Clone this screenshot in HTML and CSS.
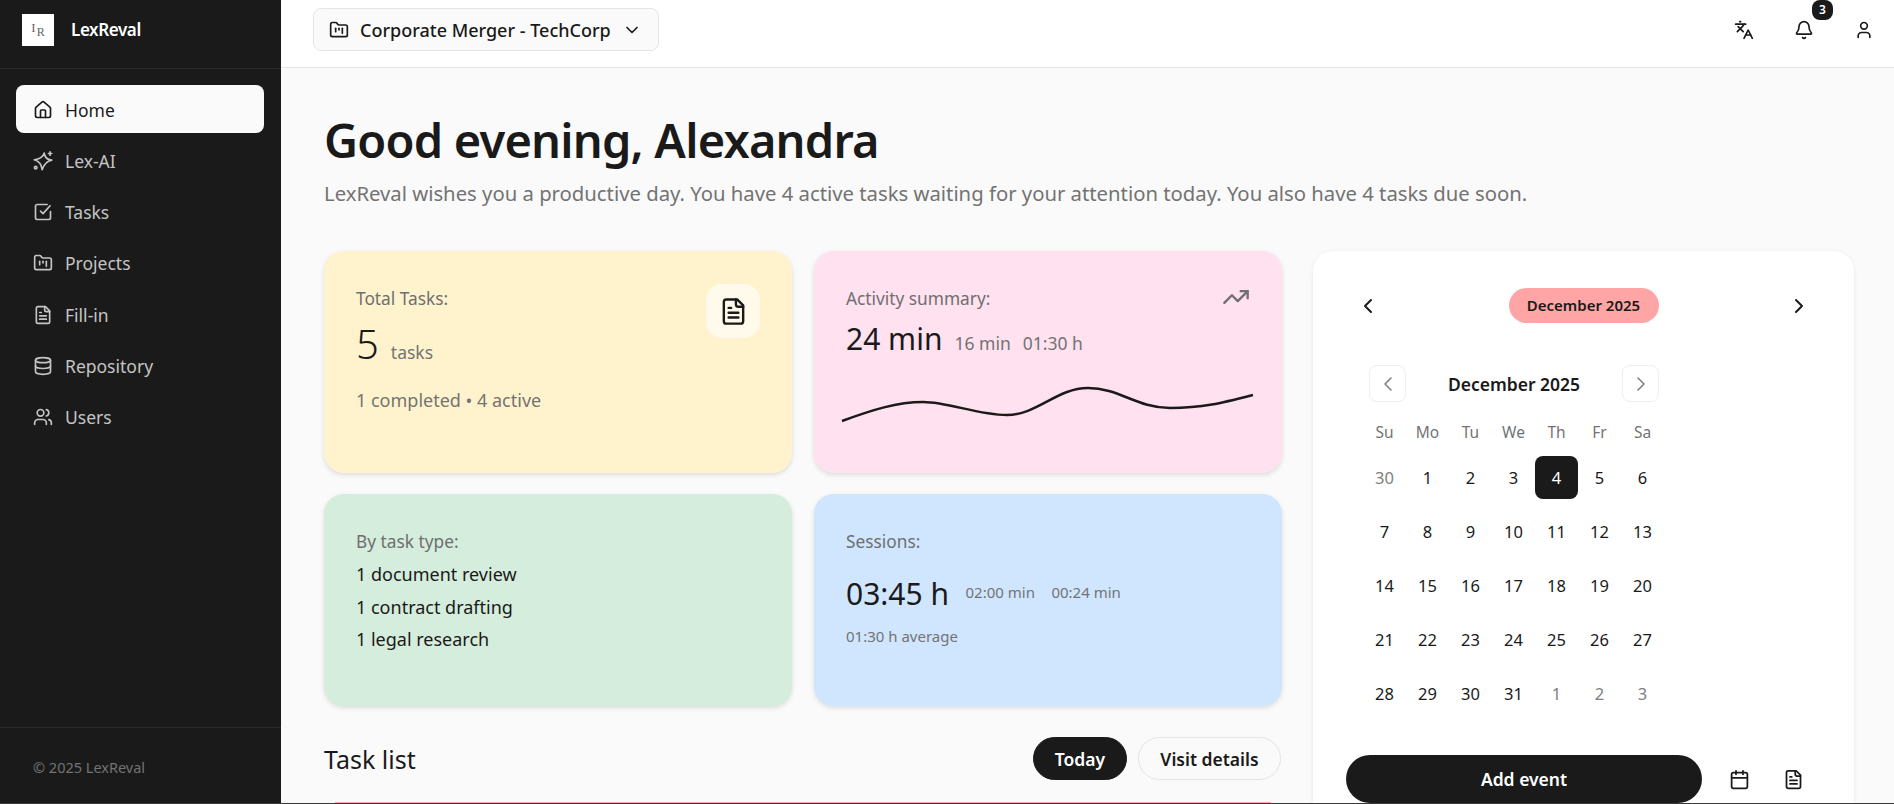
FILE: index.html
```html
<!DOCTYPE html>
<html lang="en">
<head>
  <meta charset="UTF-8">
  <meta name="viewport" content="width=device-width, initial-scale=1.0">
  <title>LexReval - Home</title>
  <link rel="stylesheet" href="styles.css">
</head>
<body>

  <!-- Sidebar -->
  <aside class="sidebar">
    <div class="brand">
      <div class="brand-logo"><span class="brand-l">I</span><span class="brand-r">R</span></div>
      <span class="brand-name">LexReval</span>
    </div>
    <nav class="side-nav">
      <a class="side-link active" href="#">
        <svg class="icon" viewBox="0 0 24 24"><path d="M15 21v-8a1 1 0 0 0-1-1h-4a1 1 0 0 0-1 1v8"/><path d="M3 10a2 2 0 0 1 .709-1.528l7-5.999a2 2 0 0 1 2.582 0l7 5.999A2 2 0 0 1 21 10v9a2 2 0 0 1-2 2H5a2 2 0 0 1-2-2z"/></svg>
        Home
      </a>
      <a class="side-link" href="#">
        <svg class="icon" viewBox="0 0 24 24"><path d="M13.5 2.5C13.8 7 16 10 22.5 11 17 12 13.5 15 11 22.5 10.5 17 8 12.5 1.5 10.5 7.5 10 12 7.5 13.5 2.5Z"/><path d="M20.5 1v4"/><path d="M18.5 3h4"/><circle cx="3.2" cy="20" r="1.5"/></svg>
        Lex-AI
      </a>
      <a class="side-link" href="#">
        <svg class="icon" viewBox="0 0 24 24"><path d="M21 11.5V19a2 2 0 0 1-2 2H5a2 2 0 0 1-2-2V5a2 2 0 0 1 2-2h12"/><path d="m9 11 3 3 8.5-9.5"/></svg>
        Tasks
      </a>
      <a class="side-link" href="#">
        <svg class="icon" viewBox="0 0 24 24"><path d="M4 20h16a2 2 0 0 0 2-2V8a2 2 0 0 0-2-2h-7.93a2 2 0 0 1-1.66-.9l-.82-1.2A2 2 0 0 0 7.93 3H4a2 2 0 0 0-2 2v13c0 1.1.9 2 2 2Z"/><path d="M8 10v4"/><path d="M12 10v2"/><path d="M16 10v6"/></svg>
        Projects
      </a>
      <a class="side-link" href="#">
        <svg class="icon" viewBox="0 0 24 24"><path d="M15 2H6a2 2 0 0 0-2 2v16a2 2 0 0 0 2 2h12a2 2 0 0 0 2-2V7Z"/><path d="M14 2v4a2 2 0 0 0 2 2h4"/><path d="M10 9H8"/><path d="M16 13H8"/><path d="M16 17H8"/></svg>
        Fill-in
      </a>
      <a class="side-link" href="#">
        <svg class="icon" viewBox="0 0 24 24"><ellipse cx="12" cy="5" rx="9" ry="3"/><path d="M3 5V19A9 3 0 0 0 21 19V5"/><path d="M3 12A9 3 0 0 0 21 12"/></svg>
        Repository
      </a>
      <a class="side-link" href="#">
        <svg class="icon" viewBox="0 0 24 24"><path d="M16 21v-2a4 4 0 0 0-4-4H6a4 4 0 0 0-4 4v2"/><circle cx="9" cy="7" r="4"/><path d="M22 21v-2a4 4 0 0 0-3-3.87"/><path d="M16 3.13a4 4 0 0 1 0 7.75"/></svg>
        Users
      </a>
    </nav>
    <div class="side-footer">&copy; 2025 LexReval</div>
  </aside>

  <div class="page">

    <!-- Top bar -->
    <header class="topbar">
      <button class="project-select">
        <svg class="icon" viewBox="0 0 24 24"><path d="M4 20h16a2 2 0 0 0 2-2V8a2 2 0 0 0-2-2h-7.93a2 2 0 0 1-1.66-.9l-.82-1.2A2 2 0 0 0 7.93 3H4a2 2 0 0 0-2 2v13c0 1.1.9 2 2 2Z"/><path d="M8 10v4"/><path d="M12 10v2"/><path d="M16 10v6"/></svg>
        <span>Corporate Merger - TechCorp</span>
        <svg class="icon" viewBox="0 0 24 24"><path d="m6 9 6 6 6-6"/></svg>
      </button>
      <div class="top-actions">
        <button class="top-btn">
          <svg class="icon" viewBox="0 0 24 24"><path d="m5 8 6 6"/><path d="m4 14 6-6 2-3"/><path d="M2 5h12"/><path d="M7 2h1"/><path d="m22 22-5-10-5 10"/><path d="M14 18h6"/></svg>
        </button>
        <button class="top-btn">
          <svg class="icon" viewBox="0 0 24 24"><path d="M10.268 21a2 2 0 0 0 3.464 0"/><path d="M3.262 15.326A1 1 0 0 0 4 17h16a1 1 0 0 0 .74-1.673C19.41 13.956 18 12.499 18 8A6 6 0 0 0 6 8c0 4.499-1.411 5.956-2.738 7.326"/></svg>
          <span class="badge">3</span>
        </button>
        <button class="top-btn">
          <svg class="icon" viewBox="0 0 24 24"><path d="M19 21v-2a4 4 0 0 0-4-4H9a4 4 0 0 0-4 4v2"/><circle cx="12" cy="7" r="4"/></svg>
        </button>
      </div>
    </header>

    <main class="content">
      <h1 class="greeting">Good evening, Alexandra</h1>
      <p class="greeting-sub">LexReval wishes you a productive day. You have 4 active tasks waiting for your attention today. You also have 4 tasks due soon.</p>

      <div class="dashboard">
        <div class="left-col">
          <div class="stat-grid">

            <section class="stat-card yellow">
              <div class="stat-label">Total Tasks:</div>
              <div class="stat-main">
                <span class="big-value">5</span>
                <span class="stat-unit">tasks</span>
              </div>
              <div class="stat-note">1 completed &bull; 4 active</div>
              <div class="doc-badge">
                <svg class="icon" viewBox="0 0 24 24"><path d="M15 2H6a2 2 0 0 0-2 2v16a2 2 0 0 0 2 2h12a2 2 0 0 0 2-2V7Z"/><path d="M14 2v4a2 2 0 0 0 2 2h4"/><path d="M10 9H8"/><path d="M16 13H8"/><path d="M16 17H8"/></svg>
              </div>
            </section>

            <section class="stat-card pink">
              <div class="stat-label">Activity summary:</div>
              <div class="stat-main">
                <span class="mid-value">24 min</span>
                <span class="stat-unit">16 min</span>
                <span class="stat-unit">01:30 h</span>
              </div>
              <svg class="trend-icon" viewBox="0 0 24 24"><path d="M22 7 13.5 15.5l-5-5L2 17"/><path d="M16 7h6v6"/></svg>
              <svg class="sparkline" viewBox="0 0 412 40"><path d="M0 35C30 24 55 16 81 16S135 29 165 29 215 2 246 2 295 22 328 22 380 17 411 9"/></svg>
            </section>

            <section class="stat-card green">
              <div class="stat-label">By task type:</div>
              <ul class="type-list">
                <li>1 document review</li>
                <li>1 contract drafting</li>
                <li>1 legal research</li>
              </ul>
            </section>

            <section class="stat-card blue">
              <div class="stat-label">Sessions:</div>
              <div class="session-main">
                <span class="mid-value">03:45 h</span>
                <span class="session-sub">02:00 min</span>
                <span class="session-sub">00:24 min</span>
              </div>
              <div class="session-avg">01:30 h average</div>
            </section>

          </div>

          <div class="task-head">
            <h2>Task list</h2>
            <div class="task-actions">
              <button class="pill-btn dark">Today</button>
              <button class="pill-btn">Visit details</button>
            </div>
          </div>
          <div class="task-card"></div>
        </div>

        <!-- Calendar -->
        <section class="calendar-card">
          <div class="month-bar">
            <svg class="icon chevron" viewBox="0 0 24 24"><path d="m15 18-6-6 6-6"/></svg>
            <span class="month-pill">December 2025</span>
            <svg class="icon chevron" viewBox="0 0 24 24"><path d="m9 18 6-6-6-6"/></svg>
          </div>
          <div class="cal">
            <div class="cal-head">
              <button class="cal-nav"><svg class="icon chevron" viewBox="0 0 24 24"><path d="m15 18-6-6 6-6"/></svg></button>
              <span class="cal-title">December 2025</span>
              <button class="cal-nav"><svg class="icon chevron" viewBox="0 0 24 24"><path d="m9 18 6-6-6-6"/></svg></button>
            </div>
            <div class="cal-weekdays">
              <span>Su</span><span>Mo</span><span>Tu</span><span>We</span><span>Th</span><span>Fr</span><span>Sa</span>
            </div>
            <div class="cal-days">
              <span class="muted">30</span><span>1</span><span>2</span><span>3</span><span class="today">4</span><span>5</span><span>6</span>
              <span>7</span><span>8</span><span>9</span><span>10</span><span>11</span><span>12</span><span>13</span>
              <span>14</span><span>15</span><span>16</span><span>17</span><span>18</span><span>19</span><span>20</span>
              <span>21</span><span>22</span><span>23</span><span>24</span><span>25</span><span>26</span><span>27</span>
              <span>28</span><span>29</span><span>30</span><span>31</span><span class="muted">1</span><span class="muted">2</span><span class="muted">3</span>
            </div>
          </div>
          <div class="cal-footer">
            <button class="add-event">Add event</button>
            <button class="cal-icon-btn"><svg class="icon" viewBox="0 0 24 24"><path d="M8 2v4"/><path d="M16 2v4"/><rect x="3" y="4" width="18" height="18" rx="2"/><path d="M3 10h18"/></svg></button>
            <button class="cal-icon-btn"><svg class="icon" viewBox="0 0 24 24"><path d="M15 2H6a2 2 0 0 0-2 2v16a2 2 0 0 0 2 2h12a2 2 0 0 0 2-2V7Z"/><path d="M14 2v4a2 2 0 0 0 2 2h4"/><path d="M10 9H8"/><path d="M16 13H8"/><path d="M16 17H8"/></svg></button>
          </div>
        </section>
      </div>
    </main>
  </div>

</body>
</html>
```

FILE: styles.css
```css
/* Global Styles */
* {
  box-sizing: border-box;
}

html,
body {
  height: 100%;
}

body {
  margin: 0;
  display: flex;
  overflow: hidden;
  background-color: #fafafa;
  border-bottom: 1px solid #3a3a3a;
  color: #1a1a1a;
  font-family: "Noto Sans", "Open Sans", sans-serif;
}

button {
  font-family: inherit;
  cursor: pointer;
}

.icon {
  display: block;
  width: 20px;
  height: 20px;
  flex-shrink: 0;
  fill: none;
  stroke: currentColor;
  stroke-width: 2;
  stroke-linecap: round;
  stroke-linejoin: round;
}

/* Sidebar */
.sidebar {
  width: 281px;
  flex-shrink: 0;
  display: flex;
  flex-direction: column;
  background-color: #1a1a1a;
  color: #c4c4c4;
}

.brand {
  height: 69px;
  padding: 14px 22px 0;
  display: flex;
  align-items: flex-start;
  gap: 17px;
  border-bottom: 1px solid #2a2a2a;
}

.brand-logo {
  width: 32px;
  height: 32px;
  display: flex;
  align-items: center;
  justify-content: center;
  gap: 1px;
  background-color: #fff;
  color: #666;
  font-family: "Liberation Serif", serif;
}

.brand-l {
  margin-top: -4px;
  font-size: 13px;
}

.brand-r {
  margin-top: 4px;
  font-size: 12px;
}

.brand-name {
  color: #fff;
  font-size: 17px;
  font-weight: 600;
  line-height: 32px;
  letter-spacing: -0.4px;
}

.side-nav {
  flex: 1;
  padding: 16px 17px 16px 16px;
  display: flex;
  flex-direction: column;
  gap: 3.3px;
}

.side-link {
  height: 48px;
  padding: 1px 0 0 17px;
  display: flex;
  align-items: center;
  gap: 12px;
  border-radius: 8px;
  color: #c4c4c4;
  font-size: 17.5px;
  text-decoration: none;
}

.side-link.active {
  background-color: #fafafa;
  color: #1a1a1a;
}

.side-footer {
  height: 76px;
  padding: 29px 33px 0;
  border-top: 1px solid #2a2a2a;
  color: #737373;
  font-size: 14.5px;
}

/* Top bar */
.page {
  flex: 1;
  min-width: 0;
  display: flex;
  flex-direction: column;
}

.topbar {
  height: 68px;
  flex-shrink: 0;
  padding: 0 20px 0 32px;
  display: flex;
  align-items: flex-start;
  justify-content: space-between;
  background-color: #fff;
  border-bottom: 1px solid #e5e5e5;
}

.project-select {
  height: 43px;
  width: 346px;
  margin-top: 8px;
  padding: 1px 15px 0;
  display: flex;
  align-items: center;
  gap: 11px;
  background-color: #fafafa;
  border: 1px solid #e5e5e5;
  border-radius: 8px;
  color: #1a1a1a;
  font-size: 18px;
  font-weight: 500;
}

.top-actions {
  display: flex;
  gap: 40px;
  padding-top: 20px;
}

.top-btn {
  position: relative;
  padding: 0;
  border: none;
  background: none;
  color: #1a1a1a;
}

.badge {
  position: absolute;
  top: -20px;
  left: 18px;
  width: 21px;
  height: 20px;
  border-radius: 8px;
  background-color: #1a1a1a;
  color: #fff;
  font-size: 12px;
  font-weight: 600;
  line-height: 20px;
  text-align: center;
}

/* Main Content Area */
.content {
  flex: 1;
  padding: 39px 40px 0 43px;
  overflow: hidden;
}

.greeting {
  margin: 0 0 6px;
  font-size: 47px;
  font-weight: 600;
  line-height: 66px;
  letter-spacing: -0.8px;
}

.greeting-sub {
  margin: 0 0 44px;
  color: #737373;
  font-size: 20.3px;
  line-height: 28px;
}

.dashboard {
  display: grid;
  grid-template-columns: 958px 541px;
  gap: 31px;
}

.stat-grid {
  display: grid;
  grid-template-columns: 468px 468px;
  grid-template-rows: 222px 212px;
  gap: 21px 22px;
}

.stat-card {
  position: relative;
  padding: 36px 32px;
  border-radius: 20px;
  box-shadow: 0 2px 5px rgba(0, 0, 0, 0.12);
}

.yellow {
  background-color: #fff3cd;
}

.pink {
  background-color: #ffe1ef;
}

.green {
  background-color: #d5eddc;
}

.blue {
  background-color: #d0e6ff;
}

.stat-label {
  color: #6f6f6f;
  font-size: 17.3px;
  line-height: 24px;
}

.stat-main {
  display: flex;
  align-items: baseline;
  gap: 12px;
  margin-top: 6px;
}

.big-value {
  font-size: 40px;
  font-weight: 300;
  line-height: 54px;
}

.mid-value {
  font-size: 30px;
  line-height: 44px;
}

.stat-unit {
  color: #737373;
  font-size: 17.5px;
}

.stat-note {
  margin-top: 17px;
  color: #737373;
  font-size: 18px;
}

.doc-badge {
  position: absolute;
  top: 33px;
  right: 32px;
  width: 54px;
  height: 54px;
  display: flex;
  align-items: center;
  justify-content: center;
  border-radius: 16px;
  background-color: rgba(255, 255, 255, 0.6);
  color: #1a1a1a;
}

.doc-badge .icon {
  width: 29px;
  height: 29px;
}

.trend-icon {
  position: absolute;
  top: 32px;
  right: 32px;
  width: 28px;
  height: 28px;
  fill: none;
  stroke: #6f6f6f;
  stroke-width: 2;
  stroke-linecap: round;
  stroke-linejoin: round;
}

.sparkline {
  position: absolute;
  left: 28px;
  top: 135px;
  width: 412px;
  height: 40px;
  fill: none;
  stroke: #1a1a1a;
  stroke-width: 2.5;
  overflow: visible;
}

.type-list {
  list-style-type: none;
  margin: 4px 0 0;
  padding: 0;
  font-size: 18px;
  line-height: 32.5px;
}

.session-main {
  display: flex;
  align-items: flex-start;
  gap: 16.5px;
  margin-top: 18px;
}

.session-sub {
  margin-top: 10px;
  color: #737373;
  font-size: 15px;
}

.session-avg {
  margin-top: 10px;
  color: #737373;
  font-size: 15px;
}

/* Task list */
.task-head {
  height: 43px;
  margin: 31px 1px 22px 0;
  display: flex;
  align-items: center;
  justify-content: space-between;
}

.task-head h2 {
  margin: 0;
  font-size: 25px;
  font-weight: 400;
}

.task-actions {
  display: flex;
  gap: 11px;
}

.pill-btn {
  width: 143px;
  height: 43px;
  padding: 0;
  border: 1px solid #e5e5e5;
  border-radius: 22px;
  background-color: #fafafa;
  color: #1a1a1a;
  font-size: 17.5px;
  font-weight: 600;
}

.pill-btn.dark {
  width: 94px;
  border-color: #1a1a1a;
  background-color: #1a1a1a;
  color: #fff;
}

.task-card {
  height: 20px;
  margin: 0 11px;
  border-top: 1px solid #ffa5a5;
}

/* Calendar */
.calendar-card {
  height: 600px;
  padding: 37px 33px 0;
  border-radius: 20px;
  background-color: #fff;
  box-shadow: 0 1px 4px rgba(0, 0, 0, 0.08);
}

.month-bar {
  height: 35px;
  margin: 0 10px;
  display: flex;
  align-items: center;
  justify-content: space-between;
}

.chevron {
  width: 24px;
  height: 24px;
}

.month-pill {
  width: 150px;
  height: 35px;
  border-radius: 18px;
  background-color: #ffa5a5;
  font-size: 15px;
  font-weight: 600;
  line-height: 35px;
  text-align: center;
}

.cal {
  width: 301px;
  margin: 42px 0 0 17px;
}

.cal-head {
  height: 37px;
  padding: 0 5px 0 6px;
  display: flex;
  align-items: center;
  justify-content: space-between;
}

.cal-nav {
  width: 37px;
  height: 37px;
  padding: 0;
  display: flex;
  align-items: center;
  justify-content: center;
  border: 1px solid #eee;
  border-radius: 8px;
  background: none;
  color: #808080;
}

.cal-nav .chevron {
  stroke-width: 1.6;
}

.cal-title {
  font-size: 17.5px;
  font-weight: 600;
}

.cal-weekdays {
  display: grid;
  grid-template-columns: repeat(7, 43px);
  margin-top: 18px;
  color: #737373;
  font-size: 15.5px;
  line-height: 24px;
  text-align: center;
}

.cal-days {
  display: grid;
  grid-template-columns: repeat(7, 43px);
  grid-auto-rows: 43px;
  row-gap: 11px;
  margin-top: 12px;
  font-size: 16.5px;
  text-align: center;
}

.cal-days span {
  line-height: 43px;
  border-radius: 8px;
}

.cal-days .muted {
  color: #808080;
}

.cal-days .today {
  background-color: #1a1a1a;
  color: #fff;
}

.cal-footer {
  margin-top: 40px;
  display: flex;
  align-items: center;
  gap: 33px;
}

.add-event {
  width: 356px;
  height: 48px;
  flex-shrink: 0;
  margin-right: -6px;
  border: none;
  border-radius: 24px;
  background-color: #1a1a1a;
  color: #fff;
  font-size: 17.5px;
  font-weight: 600;
}

.cal-icon-btn {
  padding: 0;
  border: none;
  background: none;
  color: #1a1a1a;
}

.cal-icon-btn .icon {
  width: 21px;
  height: 21px;
}
```
